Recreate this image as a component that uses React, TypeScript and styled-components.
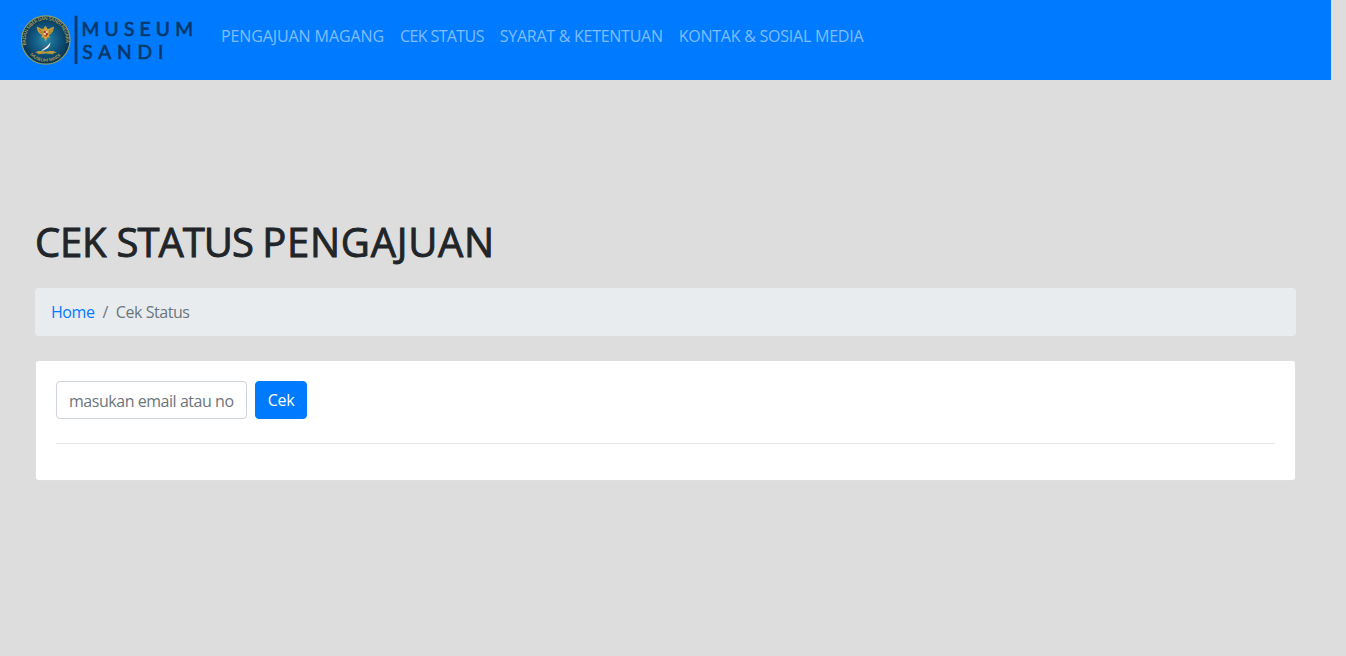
import React from 'react';
import styled, { createGlobalStyle } from 'styled-components';

const GlobalStyle = createGlobalStyle`
  *, *::before, *::after { box-sizing: border-box; }
  body {
    margin: 0;
    background: #ddd;
    color: #212529;
    font: 400 16px/24px "Segoe UI", "Open Sans", "Noto Sans", sans-serif;
  }
`;

const Page = styled.div`
  width: 1331px;
  min-height: 656px;
`;

const Navbar = styled.nav`
  display: flex;
  height: 80px;
  padding-left: 20px;
  background: #007bff;
`;

const Brand = styled.a`
  display: block;
  width: 193px;
  height: 80px;
`;

const NavList = styled.div`
  display: flex;
  align-items: flex-start;
  padding-top: 16px;
`;

const NavLink = styled.a<{ $spacing: number }>`
  padding: 8px;
  white-space: nowrap;
  color: rgba(255, 255, 255, 0.5);
  text-decoration: none;
  letter-spacing: ${(p) => p.$spacing}px;
`;

const Main = styled.main`
  padding: 138px 35px 0;
`;

const Title = styled.h1`
  margin: 0 0 22px;
  font-size: 40px;
  font-weight: 400;
  line-height: 48px;
  white-space: nowrap;
  -webkit-text-stroke: 0.9px #212529;
`;

const TitleWord = styled.span<{ $spacing: number }>`
  letter-spacing: ${(p) => p.$spacing}px;
`;

const Breadcrumb = styled.ol`
  display: flex;
  height: 48px;
  margin: 0 0 24px;
  padding: 12px 16px;
  border-radius: 4px;
  background: #e9ecef;
  list-style: none;
`;

const Crumb = styled.li`
  color: #6c757d;
  letter-spacing: -0.45px;
  & + &::before {
    content: '/';
    padding: 0 8px;
  }
  a {
    color: #007bff;
    text-decoration: none;
  }
`;

const Card = styled.section`
  height: 121px;
  padding: 20px;
  border: 1px solid rgba(0, 0, 0, 0.125);
  border-radius: 4px;
  background: #fff;
`;

const SearchForm = styled.form`
  display: flex;
  gap: 8px;
`;

const Field = styled.input`
  width: 191px;
  height: 38px;
  padding: 8px 12px 6px;
  border: 1px solid #ced4da;
  border-radius: 4px;
  background: #fff;
  font: inherit;
  letter-spacing: -0.46px;
  outline: 0;
  &::placeholder { color: #6c757d; opacity: 1; }
`;

const SubmitButton = styled.button`
  width: 52px;
  height: 38px;
  padding: 0;
  border: 1px solid #007bff;
  border-radius: 4px;
  background: #007bff;
  color: #fff;
  font: inherit;
  letter-spacing: -0.3px;
`;

const Divider = styled.hr`
  margin: 24px 0 0;
  border: 0;
  border-top: 1px solid rgba(0, 0, 0, 0.1);
`;

const links = [
  { label: 'PENGAJUAN MAGANG', spacing: -0.1 },
  { label: 'CEK STATUS', spacing: -0.6 },
  { label: 'SYARAT & KETENTUAN', spacing: -0.27 },
  { label: 'KONTAK & SOSIAL MEDIA', spacing: -0.23 },
];

function Logo() {
  return (
    <svg width="180" height="80" viewBox="20 0 180 80" role="img" aria-label="Museum Sandi">
      <defs>
        <radialGradient id="seal">
          <stop offset="0" stopColor="#2d87a8" />
          <stop offset="0.55" stopColor="#0f5680" />
          <stop offset="1" stopColor="#09324f" />
        </radialGradient>
        <path id="arcTop" d="M26.4 45a20 20 0 1 1 38.8 0" />
        <path id="arcBottom" d="M30 55a21.8 21.8 0 0 0 31.6 0" />
      </defs>
      <circle cx="45.8" cy="40" r="24.2" fill="url(#seal)" stroke="#8d9c68" strokeWidth="1.2" />
      <g fill="#a79c58" fontFamily="Lato, sans-serif" fontSize="4.6" fontWeight="700">
        <text><textPath href="#arcTop" textLength="70">BADAN SIBER DAN SANDI NEGARA</textPath></text>
        <text><textPath href="#arcBottom" textLength="34">MUSEUM SANDI</textPath></text>
      </g>
      <path d="M36.8 26.5l5 2.4 2-.3 1.2-2.7 1.7 1.2.5 1.6 1.6.2 5-2.4c.2 3.6-1.8 7.7-5 8.3l1.4 3-2.6-.6-2 4-1.9-4-2.6.6 1.4-3c-3.6-.6-5.6-4.5-5.7-8.3z" fill="#cf9f3b" />
      <path d="M38.5 29l4 2.6m10.5-2.6l-4 2.6m-9.3.2l3 1.4m9-1.4l-3 1.4" stroke="#805c27" strokeWidth=".6" />
      <path d="M43.8 31h4v3.8l-2 2-2-2z" fill="#a92d26" />
      <path d="M45.8 31h2v2h-2zm-2 2h2v2.5l-2-1z" fill="#f0d9ae" />
      <path d="M50.3 42.5c.2 4-3.1 6.6-7.7 8.2l-1.2-.2c3.5-2.2 6.4-4.2 8.9-8z" fill="#eef4ef" />
      <path d="M41.8 46l3.5.3-1.2 1.2z" fill="#b94950" />
      <path d="M35 52.7l3-1.7h4.2l3.5.7 3.5-.7h4.4l3.2 1.7-3.8.3 1 1.3-8.3-.8-8.5.8 1-1.3z" fill="#b99a40" />
      <path d="M76 15.7V64" stroke="#06386b" strokeWidth="2.8" />
      <g fill="#06386b" stroke="#06386b" strokeWidth=".7" fontFamily="Lato, sans-serif" fontSize="19.2" fontWeight="400">
        <text x="81.5" y="35.8" textLength="111.5">MUSEUM</text>
        <text x="82.3" y="58.5" textLength="81">SANDI</text>
      </g>
    </svg>
  );
}

export default function App() {
  return (
    <>
      <GlobalStyle />
      <Page>
        <Navbar>
          <Brand><Logo /></Brand>
          <NavList>
            {links.map((l) => (
              <NavLink key={l.label} $spacing={l.spacing}>{l.label}</NavLink>
            ))}
          </NavList>
        </Navbar>
        <Main>
          <Title>
            <TitleWord $spacing={-0.2}>CEK </TitleWord>
            <TitleWord $spacing={-1}>STATUS </TitleWord>
            <TitleWord $spacing={0.72}>PENGAJUAN</TitleWord>
          </Title>
          <Breadcrumb>
            <Crumb><a>Home</a></Crumb>
            <Crumb>Cek Status</Crumb>
          </Breadcrumb>
          <Card>
            <SearchForm>
              <Field placeholder="masukan email atau nomor surat" />
              <SubmitButton type="button">Cek</SubmitButton>
            </SearchForm>
            <Divider />
          </Card>
        </Main>
      </Page>
    </>
  );
}
